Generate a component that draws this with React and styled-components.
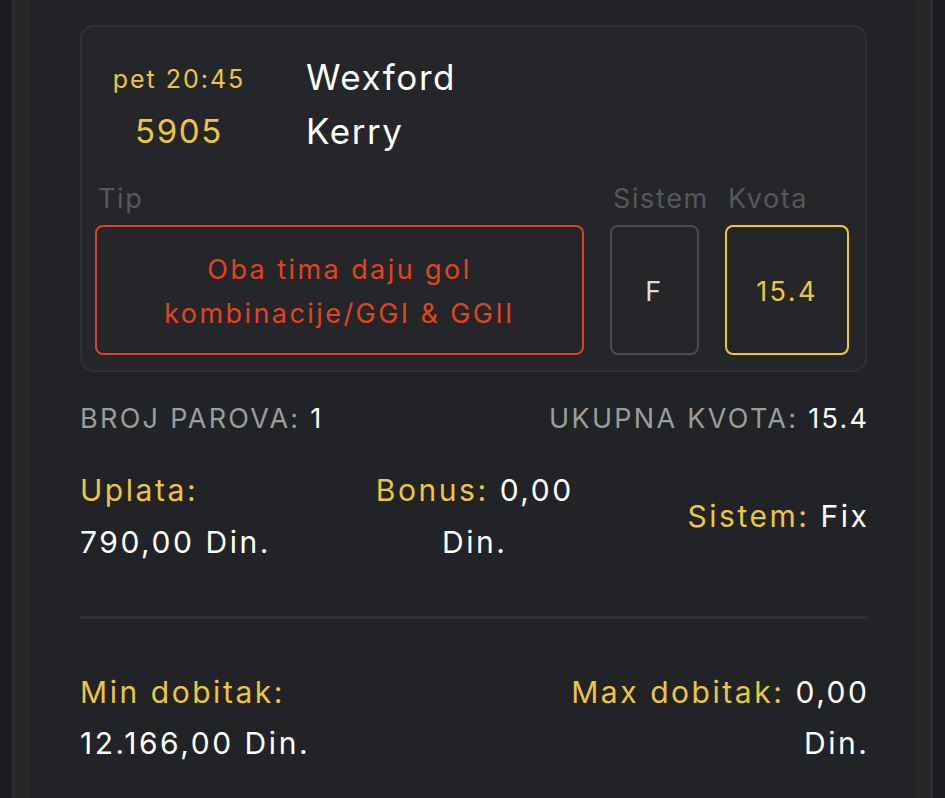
import React from "react";
import styled, { createGlobalStyle } from "styled-components";

const Global = createGlobalStyle`
  html, body { margin: 0; padding: 0; background: #1b1c1f; }
  body { font-family: Inter, "Noto Sans", sans-serif; }
`;

const Frame = styled.div`
  margin: 0 12px;
  min-height: 798px;
  border-left: 3px solid #2d2e31;
  border-right: 3px solid #2d2e31;
  background: #262729;
  padding: 0 15px;
  box-sizing: border-box;
`;

const Panel = styled.div`
  background: #222326;
  min-height: 798px;
  padding: 25px 48px 0 50px;
  box-sizing: border-box;
`;

const Card = styled.div`
  border: 2px solid #2f3033;
  border-radius: 14px;
  background: #252629;
  padding: 23px 14px 15px 13px;
`;

const Match = styled.div`
  display: grid;
  grid-template-columns: 168px 1fr;
  column-gap: 43px;
  grid-auto-rows: 54px;
  align-items: center;
`;

const Time = styled.div`
  color: #ecc63c;
  font-size: ${(p) => p.$size}px;
  letter-spacing: ${(p) => p.$spacing}em;
  text-align: center;
  padding-top: ${(p) => p.$shift || 0}px;
`;

const Team = styled.div`
  color: #ffffff;
  font-size: 35px;
  letter-spacing: 0.045em;
`;

const Bets = styled.div`
  display: grid;
  grid-template-columns: 489px 89px 124px;
  column-gap: 26px;
  margin-top: 21px;
`;

const Label = styled.div`
  color: #56575a;
  font-size: 27px;
  letter-spacing: 0.06em;
  line-height: 40px;
  padding-left: 3px;
  white-space: nowrap;
  margin-bottom: 6px;
`;

const Box = styled.div`
  height: 130px;
  box-sizing: border-box;
  border: 2px solid ${(p) => p.$border};
  border-radius: 8px;
  color: ${(p) => p.$color};
  font-size: 27px;
  letter-spacing: 0.09em;
  line-height: 44px;
  padding-top: 3px;
  display: flex;
  align-items: center;
  justify-content: center;
  text-align: center;
`;

const Summary = styled.div`
  display: flex;
  justify-content: space-between;
  margin-top: 29px;
  font-size: 27px;
  letter-spacing: 0.085em;
  line-height: 36px;
  color: #9b9c9e;
  margin-right: -0.085em;
`;

const Value = styled.span`
  color: #ffffff;
`;

const Gold = styled.span`
  color: #ecc63c;
`;

const Stakes = styled.div`
  display: grid;
  grid-template-columns: 1fr 1fr 1fr;
  align-items: center;
  margin-top: 27px;
  font-size: 30px;
  letter-spacing: 0.085em;
  line-height: 52px;
  color: #ffffff;
  margin-right: -0.085em;
`;

const Col = styled.div`
  text-align: ${(p) => p.$align};
  white-space: nowrap;
`;

const Divider = styled.div`
  height: 3px;
  background: #2e2f32;
  margin-top: 48px;
`;

const Wins = styled.div`
  display: flex;
  justify-content: space-between;
  margin-top: 48px;
  font-size: 30px;
  letter-spacing: 0.085em;
  line-height: 51px;
  color: #ffffff;
  margin-right: -0.085em;
`;

const WinCol = styled.div`
  text-align: ${(p) => p.$align};
`;

export default function App() {
  return (
    <>
      <Global />
      <Frame>
        <Panel>
          <Card>
            <Match>
              <Time $size={25} $spacing={0.08} $shift={4}>pet 20:45</Time>
              <Team>Wexford</Team>
              <Time $size={33} $spacing={0.05}>5905</Time>
              <Team>Kerry</Team>
            </Match>
            <Bets>
              <div>
                <Label>Tip</Label>
                <Box $border="#e0401f" $color="#e2431f">
                  Oba tima daju gol
                  <br />
                  kombinacije/GGI &amp; GGII
                </Box>
              </div>
              <div>
                <Label>Sistem</Label>
                <Box $border="#4a4b4e" $color="#dddddd">F</Box>
              </div>
              <div>
                <Label>Kvota</Label>
                <Box $border="#f0c92c" $color="#ecc63c">15.4</Box>
              </div>
            </Bets>
          </Card>
          <Summary>
            <div>
              BROJ PAROVA: <Value>1</Value>
            </div>
            <div>
              UKUPNA KVOTA: <Value>15.4</Value>
            </div>
          </Summary>
          <Stakes>
            <Col $align="left">
              <Gold>Uplata:</Gold>
              <br />
              790,00 Din.
            </Col>
            <Col $align="center">
              <Gold>Bonus:</Gold> 0,00
              <br />
              Din.
            </Col>
            <Col $align="right">
              <Gold>Sistem:</Gold> Fix
            </Col>
          </Stakes>
          <Divider />
          <Wins>
            <WinCol $align="left">
              <Gold>Min dobitak:</Gold>
              <br />
              12.166,00 Din.
            </WinCol>
            <WinCol $align="right">
              <Gold>Max dobitak:</Gold> 0,00
              <br />
              Din.
            </WinCol>
          </Wins>
        </Panel>
      </Frame>
    </>
  );
}
